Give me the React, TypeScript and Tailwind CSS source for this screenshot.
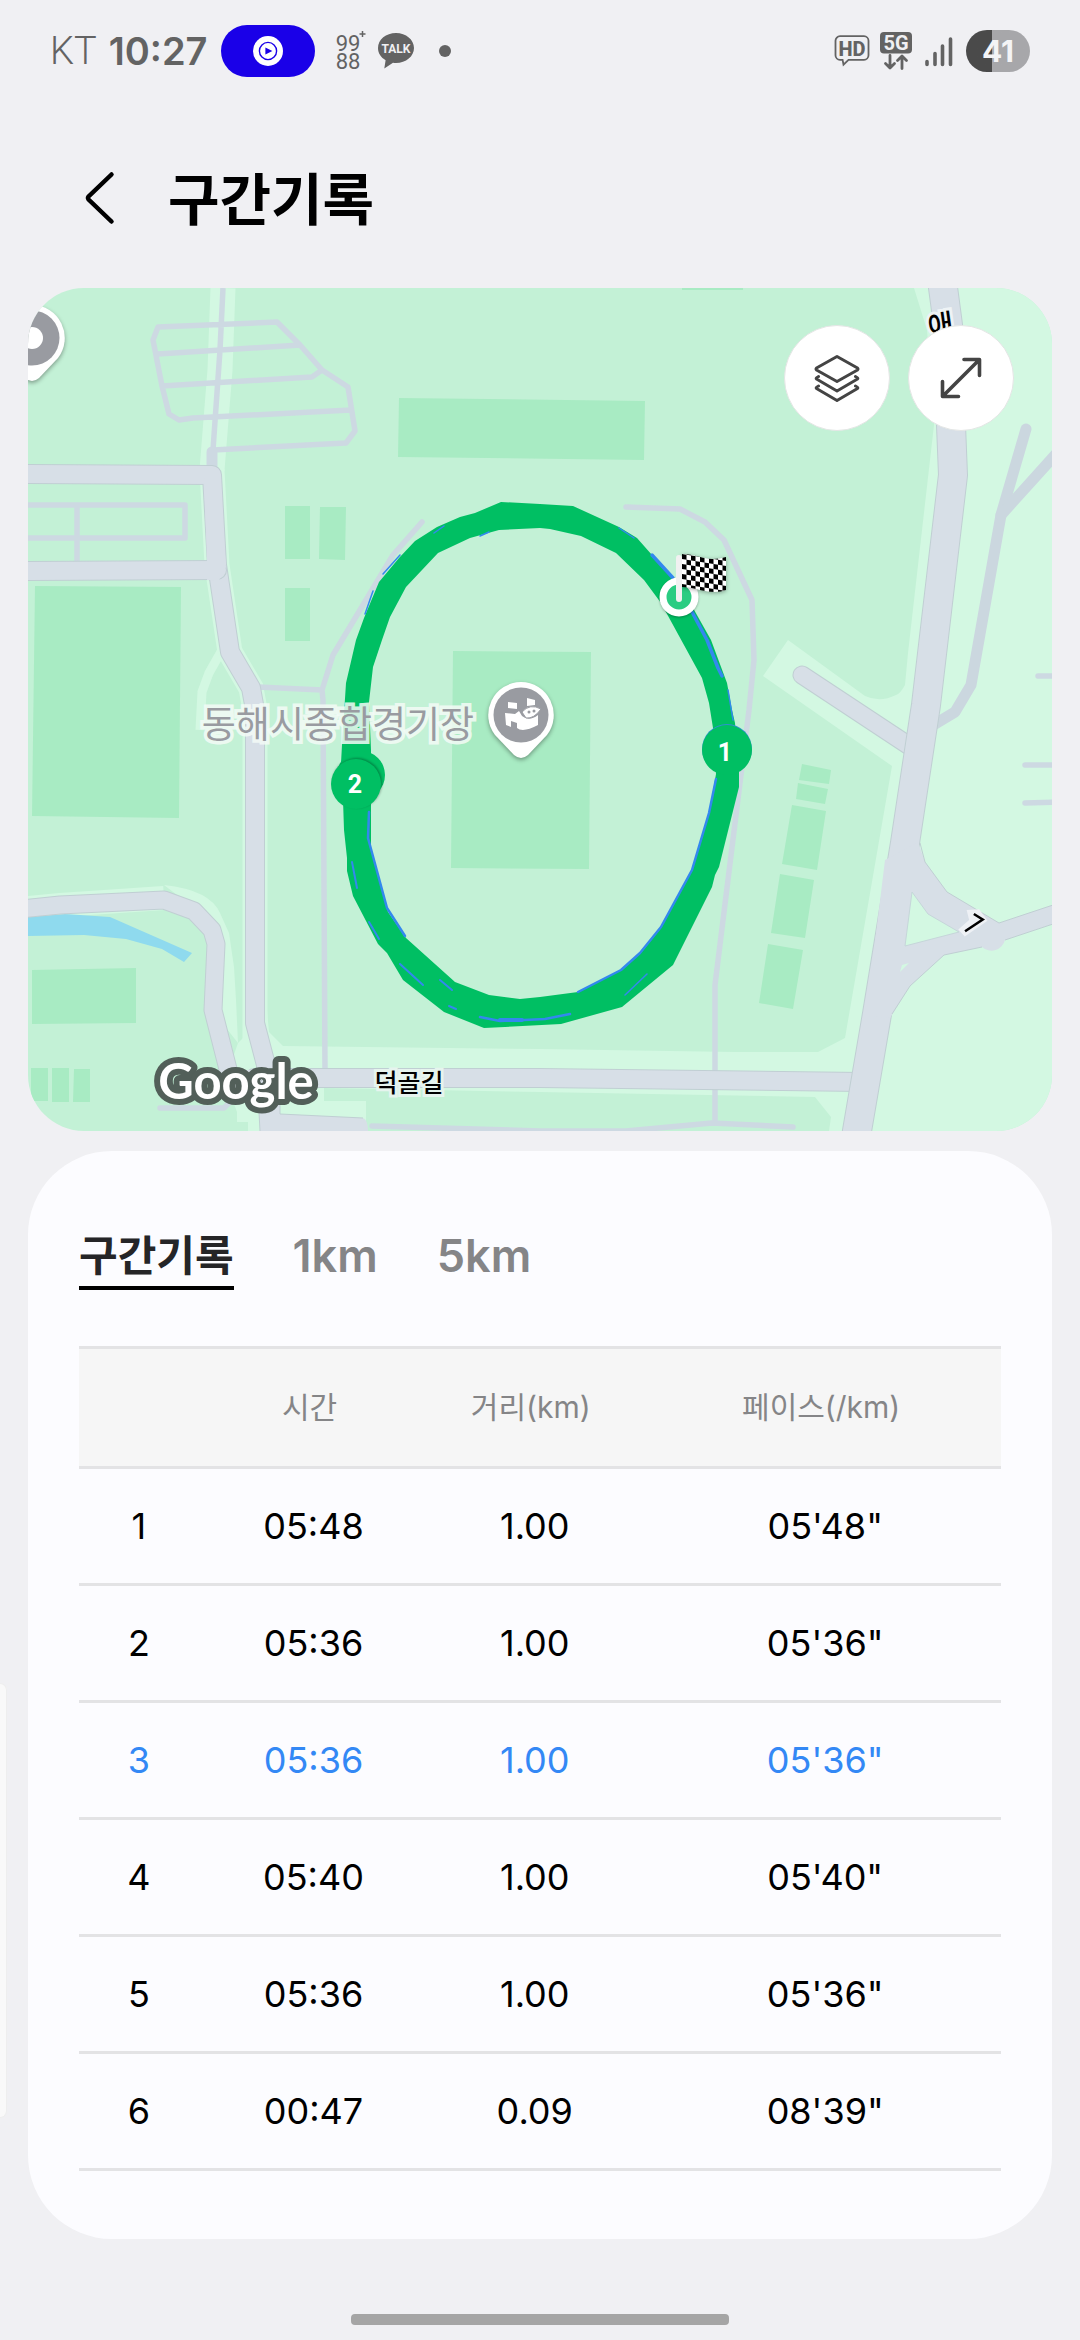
import React, { useState } from "react";

const SANS = "font-['Inter','Noto_Sans_CJK_KR',sans-serif]";

const segments = [
  { no: 1, time: "05:48", distance: "1.00", pace: "05'48\"" },
  { no: 2, time: "05:36", distance: "1.00", pace: "05'36\"" },
  { no: 3, time: "05:36", distance: "1.00", pace: "05'36\"", best: true },
  { no: 4, time: "05:40", distance: "1.00", pace: "05'40\"" },
  { no: 5, time: "05:36", distance: "1.00", pace: "05'36\"" },
  { no: 6, time: "00:47", distance: "0.09", pace: "08'39\"" },
];

const tabs = ["구간기록", "1km", "5km"];

/* Left half of the status bar: carrier, clock and notifications */
function StatusLeft() {
  return (
    <div className="flex items-center">
      <span className="font-['Roboto',sans-serif] text-[38px] font-light leading-[52px]">KT</span>
      <span className="ml-[12px] text-[38px] font-semibold leading-[52px]">10:27</span>
      <span className="ml-[13px] flex h-[52px] w-[94px] items-center justify-center rounded-full bg-[#1a00e8]">
        <svg viewBox="0 0 30 30" className="size-[30px]" aria-hidden="true">
          <circle cx="15" cy="15" r="15" fill="#fff" />
          <circle cx="15" cy="15" r="8.6" fill="none" stroke="#1a00e8" strokeWidth="1.4" />
          <path d="M12.4 11.4v7.2l7-3.6z" fill="#1a00e8" />
        </svg>
      </span>
      <svg viewBox="0 -6 30 52" className="ml-[21px] h-[52px] w-[30px]" fill="#636363" aria-hidden="true">
        <text x="12" y="20" fontSize="22" textAnchor="middle" fontFamily="Roboto">99</text>
        <text x="12" y="38" fontSize="22" textAnchor="middle" fontFamily="Roboto">88</text>
        <path d="M26.500 0v6M23.500 3h6" stroke="#636363" strokeWidth="1.500" />
      </svg>
      <svg viewBox="0 0 38 36" className="ml-[11px] h-[36px] w-[38px]" aria-hidden="true">
        <path d="M19 0C9 0 1 6.600 1 15c0 5.200 3 9.500 7.600 12.200L7.300 35.500l8.700-5.800c1 .1 2 .3 3 .3 10 0 18-6.700 18-15S29 0 19 0z" fill="#636363" />
        <text x="19" y="20" fontSize="12" fontWeight="700" textAnchor="middle" fontFamily="Roboto" fill="#f0f0f3">TALK</text>
      </svg>
      <span className="ml-[24px] size-[12px] rounded-full bg-[#636363]" />
    </div>
  );
}

/* Right half of the status bar: network, signal and battery */
function StatusRight() {
  return (
    <div className="flex items-center">
      <svg viewBox="0 0 36 32" className="h-[32px] w-[36px]" aria-hidden="true">
        <path
          d="M6 1.200h24a4.500 4.500 0 0 1 4.500 4.500v14.600a4.500 4.500 0 0 1-4.500 4.500H14.500L9.500 29.600 8.600 24.800H6a4.500 4.500 0 0 1-4.500-4.500V5.700A4.500 4.500 0 0 1 6 1.200z"
          fill="none"
          stroke="#636363"
          strokeWidth="1.800"
        />
        <text x="18" y="20.500" fontSize="20" fontWeight="800" textAnchor="middle" fontFamily="Roboto" fill="#636363">HD</text>
      </svg>
      <svg viewBox="0 0 32 38" className="ml-[10px] h-[38px] w-[32px]" aria-hidden="true">
        <rect width="32" height="21.500" rx="4" fill="#636363" />
        <text x="16" y="17.800" fontSize="20" fontWeight="700" textAnchor="middle" fontFamily="Roboto" fill="#f0f0f3">5G</text>
        <path
          d="M10 23.500v12M5.500 31.500l4.500 4.500 4.500-4.500M22 36.500v-12M17.500 28.500l4.500-4.500 4.500 4.500"
          fill="none"
          stroke="#636363"
          strokeWidth="2.800"
          strokeLinecap="round"
          strokeLinejoin="round"
        />
      </svg>
      <svg viewBox="0 0 28 31" className="ml-[13px] h-[31px] w-[28px]" aria-hidden="true">
        <path d="M2 25.500v3M10 17.500v11M17.500 10v18.500M25.500 3v25.500" stroke="#636363" strokeWidth="3.600" strokeLinecap="round" />
      </svg>
      <span className="ml-[13px] flex h-[42px] w-[64px] items-center justify-center rounded-full bg-linear-to-r from-[#4a4a4a] from-40% to-[#a7a7aa] to-40% text-[30px] font-bold leading-[42px] text-[#f4f4f6]">
        41
      </span>
    </div>
  );
}

const TRACK_OUTER =
  "M501 502L540 504L573 506L619 527L637 538L652 555L673 577L693 608L711 640L727 683L732 710L735 723L739 772L739 787L719 867L715 875L712 887L673 965L622 1007L561 1024L484 1028L444 1012L403 980L387 953L378 944L353 896L347 871L347 858L344 830L343 800L341 763L342 745L346 683L356 640L364 618L379 582L399 558L415 541L437 527L460 517L475 513Z";
const TRACK_INNER =
  "M540 528L499 530L470 538L438 553L406 587L390 617L382 640L373 667L369 702L371 750L371 850L388 912L406 938L455 982L489 995L520 999L540 997L578 992L621 970L640 953L661 927L692 870L709 813L716 774L713 728L709 703L702 678L661 603L644 580L616 553L581 536L550 529Z";

/* Roads: a thin darker casing under a pale fill */
function Road({ d, w }: { d: string; w: number }) {
  return (
    <g fill="none" strokeLinecap="round" strokeLinejoin="round">
      <path d={d} stroke="#c0cfd3" strokeWidth={w + 1} />
      <path d={d} stroke="#d7dfe7" strokeWidth={w - 1} />
    </g>
  );
}

function Pin({ x, y, children }: { x: number; y: number; children?: React.ReactNode }) {
  return (
    <g transform={`translate(${x} ${y})`}>
      <path
        d="M0-33a33 33 0 0 1 26 53L7 40Q0 46-7 40L-26 20A33 33 0 0 1 0-33z"
        fill="#fff"
        className="drop-shadow-[0_2px_2px_rgba(0,0,0,0.35)]"
      />
      <circle r="27.500" fill="#999ba1" />
      {children}
    </g>
  );
}

function TrackMap() {
  return (
    <svg viewBox="28 288 1024 843" className="block w-full" role="img" aria-label="동해시종합경기장 달리기 경로">
      <defs>
        <pattern id="check" width="9" height="10" patternUnits="userSpaceOnUse" patternTransform="translate(682 554) skewY(9)">
          <rect width="9" height="10" fill="#fff" />
          <path d="M0 0h4.500v5H0zM4.500 5H9v5H4.500z" fill="#000" />
        </pattern>
      </defs>
      <rect x="28" y="288" width="1024" height="843" fill="#c3f1d6" />

      {/* open ground around the roads */}
      <g fill="#d3f8e2">
        <path d="M914 288L927 330L934 425L908 653L905 685Q900 694 896 695Q880 703 865 696L788 640L763 676L892 766L845 1038L818 1052L735 1052L540 1049L283 1046L269 1032L266 1000H243V1038L238 1043L225 1080L237 1112V1122H248V1131H366V1101H324V1088L540 1092L815 1097L831 1117L829 1131H1052V288z" />
        <path d="M229 933L234 967L236 1000L238 1043L212 1010V930L190 905L164 885Q210 890 220 913z" />
      </g>
      <g fill="none" stroke="#d3f8e2">
        <path d="M223 288L220 370L212 470" strokeWidth="25" />
        <path d="M212 470L217 565L230 652L251 688L255 710V1040" strokeWidth="25" />
        <path d="M222 650L209 673L202 692L200 730" strokeWidth="9" />
        <path d="M28 908L60 905L164 898" strokeWidth="24" />
      </g>

      {/* buildings and courts */}
      <g fill="#a8ebc3">
        <path d="M399 398L645 401L644 460L398 457z" />
        <path d="M682 288H743V290H682z" />
        <path d="M285 506H310V559H285zM320 507H346L345 560L319 559zM285 588H310V641H285z" />
        <path d="M35 586L181 587L179 818L32 816z" />
        <path d="M453 651L591 652L589 869L451 868z" />
        <path d="M32 970L136 968V1023L32 1024z" />
        <path d="M31 1068H48V1101H31zM52 1068H69V1102H52zM74 1069H90V1102H73z" />
        <path d="M802 764L831 770L829 784L799 780zM798 783L828 789L825 804L796 799zM792 805L826 811L817 870L782 864zM780 874L814 880L805 938L771 933zM768 944L803 950L793 1009L759 1003z" />
      </g>
      <path d="M28 917L65 914L110 917L192 953L184 962L162 949L126 939L84 935L28 936z" fill="#8fdaee" />

      {/* footpaths and parking aisles */}
      <g fill="none" stroke="#cdd9e2" strokeWidth="5.500" strokeLinejoin="round">
        <path d="M223 288L220 350L213 450L346 443L355 431L348 387L322 370L300 345L277 322L158 327L153 340L162 386L169 414L179 420L193 418L351 410M158 354L300 345M162 386L312 377L322 370" />
        <path d="M28 505H185V538H28M77 505V565" />
        <path d="M258 687L322 690M422 522L393 555L333 655L322 690L323 700L325 1070" strokeLinecap="round" />
        <path d="M626 507L680 509L705 522L724 540L752 600L754 660L749 710L715 985V1123" strokeLinecap="round" />
        <path d="M160 1108H224L236 1096" strokeLinecap="round" />
        <path d="M372 1126L540 1131H626L712 1123L793 1127" strokeLinecap="round" />
        <path d="M1038 676H1056M1025 765H1056M1025 803L1056 802" strokeLinecap="round" />
      </g>
      <path d="M212 452V475" stroke="#cdd9e2" strokeWidth="11" strokeLinecap="round" />

      {/* minor roads on the east side */}
      <g fill="none" stroke="#cbd7df" strokeWidth="11" strokeLinecap="round" strokeLinejoin="round">
        <path d="M1026 429L1001 515L971 685L955 712L935 724" />
        <path d="M1056 454L1001 515" />
      </g>

      <Road d="M20 474L212 475L217 565L230 652L251 688L255 710V1023L266 1065L270 1140" w={19} />
      <Road d="M20 571L217 570" w={19} />
      <Road d="M20 909L60 905L164 900L194 911L212 930L216 944L213 1010L232 1085" w={18} />
      <Road d="M254 1078L540 1078L862 1082" w={19} />
      <Road d="M802 675L920 753" w={18} />
      <Road d="M942 280L948 325L951 425L953 475L926 705L905 843L877 1014L857 1131L855 1145" w={29} />
      <path
        d="M918 842L925 862L947 892L999 923L1056 904V923L1005 940A14 14 0 0 1 982 947L944 955L910 986L890 1018L866 1016L885 860z"
        fill="#d7dfe7"
      />
      <path d="M920 843L925 862L947 892L999 923L1056 904M1056 923L1005 940M982 947L944 955L910 986L892 1014" fill="none" stroke="#c0cfd3" />
      <path d="M912 892L928 914L959 932L905 946z" fill="#d3f8e2" stroke="#c6d6da" />
      <path d="M902 965L909 963L900 972z" fill="#d3f8e2" />
      <path d="M204 476H220V490L226 567L219 580H207V560z" fill="#d7dfe7" />
      <path d="M223 1070H300V1086H280V1114L363 1118Q368 1120 368 1131H261V1100L256 1086H232z" fill="#d7dfe7" />
      <path d="M280 1086V1114L363 1118" fill="none" stroke="#c0cfd3" />

      {/* running route */}
      <path d={TRACK_OUTER + TRACK_INNER} fillRule="evenodd" fill="#00bf63" />
      <g fill="none" stroke="#3388ee" strokeWidth="3" strokeLinecap="round" strokeLinejoin="round">
        <path d="M652 555L673 578M692 612L707 640L718 668L722 676" strokeWidth="3.500" />
        <path d="M716 779L709 813L692 870L661 927L640 953L621 970L578 992" strokeWidth="2.500" />
        <path d="M369 812L368 838L387 908L405 936" strokeWidth="2.500" />
        <path d="M352 862L357 888M369 922L379 939M400 964L423 985M440 980L452 990M449 1006L456 1009" strokeWidth="2" />
        <path d="M480 1017L500 1021L545 1019L570 1014" strokeWidth="2.500" />
        <path d="M500 1020H522" strokeWidth="4" />
        <path d="M625 995L647 974M434 533L444 526M480 536L489 532M365 614L373 591M383 574L400 555" strokeWidth="1.500" />
        <path d="M619 528L634 538M728 690L733 720" strokeWidth="1.500" />
      </g>

      {/* place labels */}
      <g fontFamily="'Noto Sans CJK KR', sans-serif" textAnchor="middle" paintOrder="stroke" strokeLinejoin="miter">
        <text x="338" y="738" fontSize="37" fill="#999ba1" stroke="#f4fbf7" strokeOpacity="0.85" strokeWidth="7">
          동해시종합경기장
        </text>
        <text x="409" y="1092" fontSize="25" fontWeight="500" fill="#000" stroke="#e6f4ee" strokeWidth="6">
          덕골길
        </text>
        <text transform="translate(942 335) rotate(-8)" fontSize="28" fontWeight="500" fill="#000" stroke="#eef3f5" strokeWidth="6">
          애
        </text>
      </g>
      <g transform="translate(973 921) rotate(15)">
        <path d="M-9-9L3-13L14-4L-4 17L-12 12L-4 0z" fill="#eef1f5" />
        <path d="M-1-7L9-4L-5 12" fill="none" stroke="#000" strokeWidth="2.500" />
      </g>

      {/* kilometre markers */}
      <g fill="#00bf63">
        <circle cx="727" cy="750" r="25" className="drop-shadow-[0_-1px_0_#2f8fd0]" />
        <circle cx="361" cy="775" r="24" />
        <circle cx="356" cy="784" r="25" className="drop-shadow-[1px_-1px_1px_rgba(0,0,0,0.3)]" />
      </g>
      <g fontFamily="Roboto" fontSize="25" fontWeight="700" fill="#fff" textAnchor="middle">
        <text x="725" y="761">1</text>
        <text x="355" y="793">2</text>
      </g>

      {/* finish flag */}
      <circle cx="679" cy="597" r="16" fill="#2bcc82" stroke="#fff" strokeWidth="7" className="drop-shadow-[0_1px_1px_rgba(0,0,0,0.3)]" />
      <path d="M682 554Q690 554 700 557Q714 561 726 557V590Q716 594 700 590Q690 587 682 587z" fill="url(#check)" className="drop-shadow-[0_1px_2px_rgba(0,0,0,0.35)]" />
      <path d="M679 558V599" stroke="#f1f1f1" strokeWidth="6" strokeLinecap="round" />

      <Pin x={521} y={715}>
        <g fill="#fff">
          <path d="M-13-13L-4-12V-6L-13-7zM6-17L14-15V-10L6-9z" />
          <path d="M-16-2L-6-1L-2-4L1 1Q8 7 17 0V10Q2 18-4 13V8L-10 6V12L-15 10z" />
          <path d="M1-3Q9-12 20-6Q13 4 5 3z" stroke="#999ba1" strokeWidth="1" />
        </g>
        <circle cx="8" cy="-3" r="1.500" fill="#999ba1" />
        <circle cx="13" cy="-4" r="1.500" fill="#999ba1" />
      </Pin>
      <Pin x={32} y={338}>
        <circle r="11" fill="#fff" />
      </Pin>

      <text
        x="236"
        y="1099"
        fontFamily="Lato, sans-serif"
        fontSize="49"
        fontWeight="700"
        textAnchor="middle"
        fill="#fff"
        stroke="#525f59"
        strokeWidth="12"
        strokeLinejoin="round"
        paintOrder="stroke"
      >
        Google
      </text>
    </svg>
  );
}

const mapButton =
  "flex size-[106px] items-center justify-center rounded-full border border-[#e4e6e5] bg-white text-[#444444]";

export default function App() {
  const [active, setActive] = useState(tabs[0]);

  return (
    <div className={`relative flex min-h-screen flex-col bg-[#f0f0f3] text-black ${SANS}`}>
      <div className="flex items-center justify-between pt-[25px] pr-[50px] pb-[31px] pl-[50px] text-[#636363]">
        <StatusLeft />
        <StatusRight />
      </div>

      <header className="flex h-[180px] items-center gap-[52px] pl-[84px]">
        <button type="button" aria-label="뒤로" className="flex w-[32px] items-center">
          <svg viewBox="0 0 32 54" className="h-[54px] w-[32px]" aria-hidden="true">
            <path d="M27.500 3.500L4.600 25.500Q3.400 27 4.600 28.500L27.500 50.500" fill="none" stroke="#000" strokeWidth="4.500" strokeLinecap="round" />
          </svg>
        </button>
        <h1 className="pt-1 text-[56px] font-bold leading-[72px]">구간기록</h1>
      </header>

      <main className="flex flex-col gap-5 px-7">
        <section className="relative overflow-hidden rounded-[56px]">
          <TrackMap />
          <div className="absolute top-[37px] right-[38px] flex gap-[18px]">
            <button type="button" aria-label="지도 종류" className={mapButton}>
              <svg viewBox="0 0 46 48" className="h-[48px] w-[46px]" fill="none" stroke="currentColor" strokeWidth="3" strokeLinejoin="round" strokeLinecap="round" aria-hidden="true">
                <path d="M23 2.500L43.500 14Q44.500 15 43.500 16L23 27.500L2.500 16Q1.500 15 2.500 14z" />
                <path d="M4.500 22.500Q1.500 24 2.500 25L23 37L43.500 25Q44.500 24 41.500 22.500" />
                <path d="M4.500 32Q1.500 33.500 2.500 34.500L23 46.500L43.500 34.500Q44.500 33.500 41.500 32" />
              </svg>
            </button>
            <button type="button" aria-label="지도 확대" className={mapButton}>
              <svg viewBox="0 0 42 42" className="size-[42px]" fill="none" stroke="currentColor" strokeWidth="3.600" strokeLinejoin="round" strokeLinecap="round" aria-hidden="true">
                <path d="M24 2.500H39.500V18.500M2.500 24.500V39.500H18.500M39 3L3 39" />
              </svg>
            </button>
          </div>
        </section>

        <section className="rounded-[84px] bg-[#fcfcff] px-[51px] pt-[75px] pb-[68px]">
          <div role="tablist" className="flex items-start gap-[59px]">
            {tabs.map((tab) => (
              <button
                key={tab}
                type="button"
                role="tab"
                aria-selected={active === tab}
                onClick={() => setActive(tab)}
                className={`border-b-4 leading-[60px] ${
                  active === tab
                    ? "border-black text-[42px] font-bold text-[#252527]"
                    : "border-transparent text-[45px] font-semibold text-[#858587]"
                }`}
              >
                {tab}
              </button>
            ))}
          </div>

          <table className="mt-14 w-full table-fixed border-separate border-spacing-0 text-center">
            <colgroup>
              <col className="w-[13%]" />
              <col className="w-[24%]" />
              <col className="w-[24%]" />
              <col />
            </colgroup>
            <thead>
              <tr>
                {["", "시간", "거리(km)", "페이스(/km)"].map((label, i) => (
                  <th
                    key={i}
                    scope="col"
                    className="h-[123px] border-y-3 border-[#e3e3e5] bg-[#f6f6f6] p-0 text-[30px] font-normal text-[#858587]"
                  >
                    {label}
                  </th>
                ))}
              </tr>
            </thead>
            <tbody>
              {segments.map((s) => (
                <tr key={s.no} className={s.best ? "text-[#3388f5]" : "text-black"}>
                  {[s.no, s.time, s.distance, s.pace].map((value, i) => (
                    <td
                      key={i}
                      className={`h-[117px] border-b-3 border-[#e3e3e5] py-0 pr-0 text-[36px] ${i > 0 ? "pl-2" : "pl-0"}`}
                    >
                      {value}
                    </td>
                  ))}
                </tr>
              ))}
            </tbody>
          </table>
        </section>
      </main>

      {/* edge panel handle */}
      <div className="absolute top-[1683px] left-0 h-[435px] w-[7px] rounded-r-[7px] border border-l-0 border-[#eeeeee] bg-[#f9f9f9]" />

      <div className="mt-auto flex justify-center pb-[15px]">
        <div className="h-[11px] w-[35%] rounded-[4px] bg-[#a5a5a5]" />
      </div>
    </div>
  );
}
